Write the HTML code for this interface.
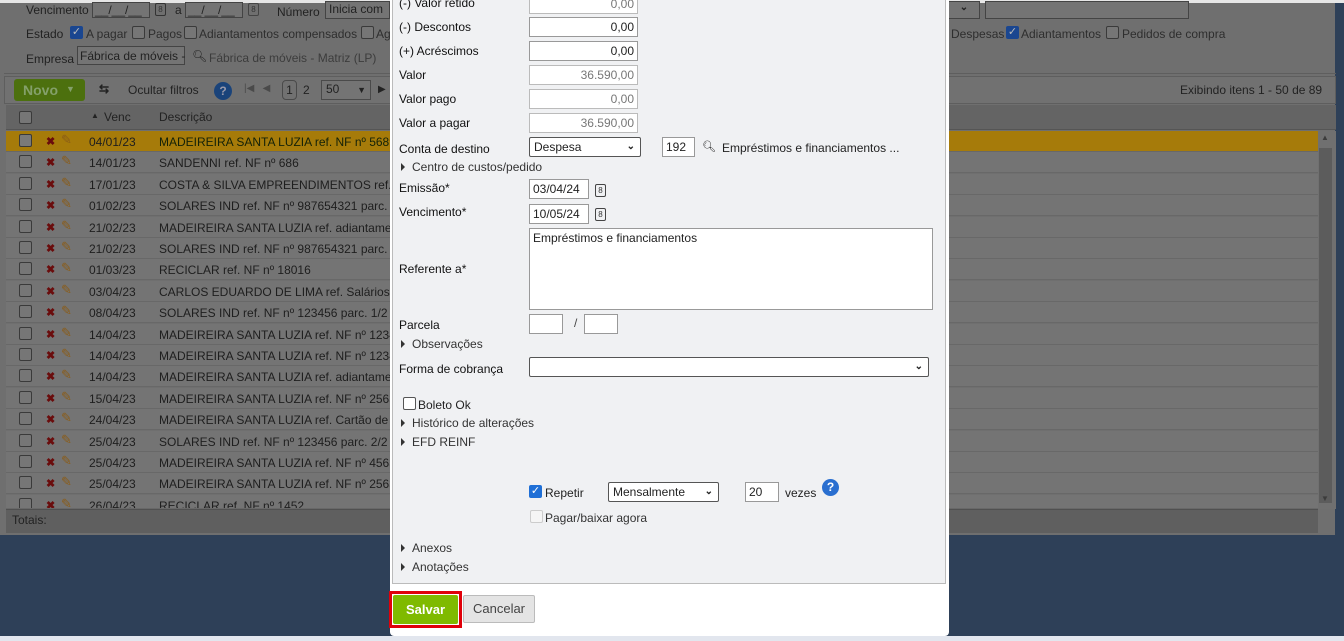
<!DOCTYPE html>
<html><head><meta charset="utf-8"><style>
*{box-sizing:border-box;margin:0;padding:0}
body{width:1344px;height:641px;overflow:hidden;position:relative;background:#2e4058;font-family:"Liberation Sans",Verdana,sans-serif;font-size:12px;color:#222}
.a{position:absolute;white-space:nowrap}
.bg{position:absolute;left:0;top:0;width:1338px;height:535px;background:#6f6f6f;border-right:3px solid #2e4058}
.t{color:#222}
.row{position:absolute;left:8px;width:1308px;height:21px;background:#747474;border-bottom:1px solid #686868}
.cb{position:absolute;width:13px;height:13px;border:1px solid #3a3a3a;border-radius:2px;background:#767676}
.x{color:#6a0c0c;font-weight:bold;font-size:11px}
.inp{position:absolute;background:#fff;border:1px solid #999;height:20px;font-size:12px;padding:2px 3px;text-align:right}
.ro{color:#777;border-color:#bbb}
.lbl{position:absolute;left:399px;font-size:12px;color:#111}
.tri{position:absolute;width:0;height:0;border-left:4px solid #333;border-top:4px solid transparent;border-bottom:4px solid transparent}
.sel{position:absolute;background:#fff;border:1px solid #555;border-radius:2px;height:20px;padding:2px 4px;font-size:12px}
.chev{position:absolute;right:5px;top:3px;font-size:10px;font-weight:bold}
.cal{position:absolute;width:11px;height:13px;border:1px solid #444;border-radius:2px;font-size:8px;text-align:center;line-height:11px;color:#333}
</style></head><body>
<div class="bg"></div>
<div class="a" style="left:0;top:0;width:1344px;height:3px;background:#e6e6e6"></div>
<div class="a t" style="left:26px;top:3px;font-size:12px">Vencimento</div>
<div class="a" style="left:92px;top:2px;width:58px;height:16px;border:1px solid #444;background:#747474;font-size:12px;padding-left:2px">__/__/__</div>
<div class="cal" style="left:155px;top:3px;border-color:#333">8</div>
<div class="a t" style="left:175px;top:3px">a</div>
<div class="a" style="left:185px;top:2px;width:58px;height:16px;border:1px solid #444;background:#747474;padding-left:2px">__/__/__</div>
<div class="cal" style="left:248px;top:3px">8</div>
<div class="a t" style="left:277px;top:5px">Número</div>
<div class="a" style="left:325px;top:1px;width:65px;height:18px;border:1px solid #444;background:#747474;padding-left:3px">Inicia com</div>
<div class="a" style="left:948px;top:1px;width:32px;height:18px;border:1px solid #444;background:#747474;text-align:center;font-weight:bold;font-size:10px">⌄</div>
<div class="a" style="left:985px;top:1px;width:204px;height:18px;border:1px solid #444;background:#747474"></div>
<div class="a t" style="left:26px;top:27px">Estado</div>
<div class="a" style="left:70px;top:26px;width:13px;height:13px;background:#1a4690;border-radius:2px;color:#bbb;font-size:11px;line-height:13px;text-align:center">✓</div>
<div class="a" style="left:86px;top:27px;color:#2e2e2e">A pagar</div>
<div class="cb" style="left:132px;top:26px"></div>
<div class="a" style="left:148px;top:27px;color:#2e2e2e">Pagos</div>
<div class="cb" style="left:184px;top:26px"></div>
<div class="a" style="left:199px;top:27px;color:#2e2e2e">Adiantamentos compensados</div>
<div class="cb" style="left:361px;top:26px"></div>
<div class="a" style="left:376px;top:27px;color:#2e2e2e">Ag</div>
<div class="a" style="left:951px;top:27px;color:#2e2e2e">Despesas</div>
<div class="a" style="left:1006px;top:26px;width:13px;height:13px;background:#1a4690;border-radius:2px;color:#bbb;font-size:11px;line-height:13px;text-align:center">✓</div>
<div class="a" style="left:1021px;top:27px;color:#2e2e2e">Adiantamentos</div>
<div class="cb" style="left:1106px;top:26px"></div>
<div class="a" style="left:1122px;top:27px;color:#2e2e2e">Pedidos de compra</div>
<div class="a t" style="left:26px;top:52px">Empresa</div>
<div class="a" style="left:77px;top:46px;width:108px;height:19px;border:1px solid #444;background:#747474;padding:2px">Fábrica de móveis -</div>
<div class="a" style="left:192px;top:49px;color:#222">🔍︎</div>
<div class="a" style="left:209px;top:51px;color:#3c3c3c">Fábrica de móveis - Matriz (LP)</div>
<div class="a" style="left:4px;top:73px;width:1332px;height:1px;background:#5e5e5e"></div>
<div class="a" style="left:4px;top:76px;width:1332px;height:28px;background:#717171;border:1px solid #5e5e5e"></div>
<div class="a" style="left:14px;top:79px;width:71px;height:22px;background:#4c700e;border-radius:3px;color:#84a06a;font-weight:bold;font-size:14px;padding:3px 9px">Novo<span style="position:absolute;left:52px;top:5px;font-size:9px;color:#84a06a">▼</span></div>
<div class="a" style="left:99px;top:82px;color:#222;font-weight:bold">⇆</div>
<div class="a" style="left:128px;top:83px;color:#222">Ocultar filtros</div>
<div class="a" style="left:214px;top:82px;width:18px;height:18px;border-radius:50%;background:#1a437a;color:#99a;font-weight:bold;text-align:center;line-height:18px">?</div>
<div class="a" style="left:244px;top:83px;color:#4a4a4a;font-size:10px">|◀ &nbsp; ◀</div>
<div class="a" style="left:282px;top:80px;width:15px;height:20px;border:1px solid #4a4a4a;border-radius:4px;text-align:center;line-height:18px">1</div>
<div class="a" style="left:303px;top:83px">2</div>
<div class="a" style="left:321px;top:80px;width:50px;height:20px;border:1px solid #4a4a4a;background:#747474;padding:1px 4px">50<span style="position:absolute;right:4px;top:4px;font-size:9px">▼</span></div>
<div class="a" style="left:378px;top:84px;font-size:10px">▶</div>
<div class="a" style="left:1180px;top:83px;color:#222">Exibindo itens 1 - 50 de 89</div>
<div class="a" style="left:6px;top:105px;width:1330px;height:25px;background:#646464;border-bottom:1px solid #555"></div>
<div class="cb" style="left:19px;top:111px"></div>
<div class="a" style="left:91px;top:111px;font-size:8px">▲</div>
<div class="a" style="left:104px;top:110px;color:#222">Venc</div>
<div class="a" style="left:159px;top:110px;color:#222">Descrição</div>
<div id="rows"></div>
<div class="a" style="left:6px;top:509px;width:1312px;height:24px;background:#5f5f5f;border-top:1px solid #505050"></div>
<div class="a" style="left:12px;top:513px;color:#222">Totais:</div>
<div class="a" style="left:1318px;top:131px;width:18px;height:378px;background:#707070"></div>
<div class="a" style="left:1319px;top:148px;width:13px;height:355px;background:#5c5c5c"></div>
<div class="a" style="left:1321px;top:133px;font-size:8px;color:#3c3c3c">▲</div>
<div class="a" style="left:1321px;top:494px;font-size:8px;color:#3c3c3c">▼</div>
<div class="a" style="left:0;top:636px;width:1344px;height:5px;background:#e2e6ee"></div>

<div class="a" style="left:390px;top:0;width:559px;height:636px;background:#fff;border-radius:0 0 4px 4px"></div>
<div class="a" style="left:392px;top:0;width:554px;height:584px;background:#f0f1f3;border:1px solid #bbb;border-top:none"></div>
<div class="lbl" style="top:-4px">(-) Valor retido</div><div class="inp ro" style="left:529px;top:-6px;width:109px">0,00</div>
<div class="lbl" style="top:20px">(-) Descontos</div><div class="inp" style="left:529px;top:17px;width:109px">0,00</div>
<div class="lbl" style="top:44px">(+) Acréscimos</div><div class="inp" style="left:529px;top:41px;width:109px">0,00</div>
<div class="lbl" style="top:68px">Valor</div><div class="inp ro" style="left:529px;top:65px;width:109px">36.590,00</div>
<div class="lbl" style="top:92px">Valor pago</div><div class="inp ro" style="left:529px;top:89px;width:109px">0,00</div>
<div class="lbl" style="top:116px">Valor a pagar</div><div class="inp ro" style="left:529px;top:113px;width:109px">36.590,00</div>
<div class="lbl" style="top:142px">Conta de destino</div>
<div class="sel" style="left:529px;top:137px;width:112px">Despesa<span class="chev">⌄</span></div>
<div class="inp" style="left:662px;top:137px;width:33px;text-align:left">192</div>
<div class="a" style="left:702px;top:140px;font-size:11px">🔍︎</div>
<div class="a" style="left:722px;top:141px;color:#222">Empréstimos e financiamentos ...</div>
<div class="tri" style="left:401px;top:163px"></div><div class="a" style="left:412px;top:160px;color:#333">Centro de custos/pedido</div>
<div class="lbl" style="top:181px">Emissão*</div><div class="inp" style="left:529px;top:179px;width:60px;text-align:left">03/04/24</div><div class="cal" style="left:595px;top:184px">8</div>
<div class="lbl" style="top:205px">Vencimento*</div><div class="inp" style="left:529px;top:204px;width:60px;text-align:left">10/05/24</div><div class="cal" style="left:595px;top:208px">8</div>
<div class="inp" style="left:529px;top:228px;width:404px;height:82px;text-align:left">Empréstimos e financiamentos</div>
<div class="lbl" style="top:262px">Referente a*</div>
<div class="lbl" style="top:318px">Parcela</div>
<div class="inp" style="left:529px;top:314px;width:34px"></div><div class="a" style="left:574px;top:316px;color:#444">/</div><div class="inp" style="left:584px;top:314px;width:34px"></div>
<div class="tri" style="left:401px;top:340px"></div><div class="a" style="left:412px;top:337px;color:#333">Observações</div>
<div class="lbl" style="top:362px">Forma de cobrança</div>
<div class="sel" style="left:529px;top:357px;width:400px"><span class="chev">⌄</span></div>
<div class="a" style="left:403px;top:397px;width:13px;height:13px;border:1px solid #555;border-radius:2px;background:#fff"></div>
<div class="a" style="left:418px;top:398px">Boleto Ok</div>
<div class="tri" style="left:401px;top:419px"></div><div class="a" style="left:412px;top:416px;color:#333">Histórico de alterações</div>
<div class="tri" style="left:401px;top:438px"></div><div class="a" style="left:412px;top:435px;color:#333">EFD REINF</div>
<div class="a" style="left:529px;top:485px;width:13px;height:13px;background:#1f6fd6;border-radius:2px;color:#fff;font-size:11px;line-height:13px;text-align:center">✓</div>
<div class="a" style="left:545px;top:486px">Repetir</div>
<div class="sel" style="left:608px;top:482px;width:111px">Mensalmente<span class="chev">⌄</span></div>
<div class="inp" style="left:745px;top:482px;width:34px;text-align:left">20</div>
<div class="a" style="left:785px;top:486px">vezes</div>
<div class="a" style="left:822px;top:479px;width:17px;height:17px;border-radius:50%;background:#2a6fd0;color:#fff;font-weight:bold;text-align:center;line-height:17px;font-size:12px">?</div>
<div class="a" style="left:530px;top:510px;width:13px;height:13px;border:1px solid #ccc;border-radius:2px;background:#f5f5f5"></div>
<div class="a" style="left:545px;top:511px;color:#333">Pagar/baixar agora</div>
<div class="tri" style="left:401px;top:544px"></div><div class="a" style="left:412px;top:541px;color:#333">Anexos</div>
<div class="tri" style="left:401px;top:563px"></div><div class="a" style="left:412px;top:560px;color:#333">Anotações</div>
<div class="a" style="left:389px;top:591px;width:73px;height:37px;border:3px solid #e0000a"></div>
<div class="a" style="left:393px;top:595px;width:65px;height:29px;background:#7fba00;border-radius:2px;color:#fff;font-weight:bold;font-size:13px;text-align:center;line-height:29px">Salvar</div>
<div class="a" style="left:463px;top:595px;width:72px;height:28px;background:#e4e4e4;border:1px solid #bbb;border-radius:2px;color:#444;font-size:13px;text-align:center;line-height:26px">Cancelar</div>
<script>
var d=[["04/01/23","MADEIREIRA SANTA LUZIA ref. NF nº 5689"],["14/01/23","SANDENNI ref. NF nº 686"],["17/01/23","COSTA & SILVA EMPREENDIMENTOS ref. NF"],["01/02/23","SOLARES IND ref. NF nº 987654321 parc."],["21/02/23","MADEIREIRA SANTA LUZIA ref. adiantamen"],["21/02/23","SOLARES IND ref. NF nº 987654321 parc."],["01/03/23","RECICLAR ref. NF nº 18016"],["03/04/23","CARLOS EDUARDO DE LIMA ref. Salários"],["08/04/23","SOLARES IND ref. NF nº 123456 parc. 1/2"],["14/04/23","MADEIREIRA SANTA LUZIA ref. NF nº 1234"],["14/04/23","MADEIREIRA SANTA LUZIA ref. NF nº 1234"],["14/04/23","MADEIREIRA SANTA LUZIA ref. adiantamen"],["15/04/23","MADEIREIRA SANTA LUZIA ref. NF nº 2563"],["24/04/23","MADEIREIRA SANTA LUZIA ref. Cartão de c"],["25/04/23","SOLARES IND ref. NF nº 123456 parc. 2/2"],["25/04/23","MADEIREIRA SANTA LUZIA ref. NF nº 4563"],["25/04/23","MADEIREIRA SANTA LUZIA ref. NF nº 2563"],["26/04/23","RECICLAR ref. NF nº 1452"]];
var h="";for(var i=0;i<d.length;i++){var y=131+i*21.4;var hl=i==0;
h+='<div class="row" style="top:'+y+'px;left:6px;width:1312px;height:'+(i==17?'14':'21')+'px;overflow:hidden;'+(hl?'background:#a67b0a':'')+'"><div class="cb" style="left:13px;top:3px;'+(hl?'background:#7a7a7a':'')+'"></div><div class="a x" style="left:40px;top:4px">✖</div><div class="a" style="left:55px;top:1px;color:#8a5c18;font-size:13px">✎</div><div class="a" style="left:83px;top:4px;color:#1e1e1e">'+d[i][0]+'</div><div class="a" style="left:153px;top:4px;color:'+(hl?'#142208':'#1e1e1e')+'">'+d[i][1]+'</div></div>';}
document.getElementById("rows").innerHTML=h;
</script>
</body></html>
